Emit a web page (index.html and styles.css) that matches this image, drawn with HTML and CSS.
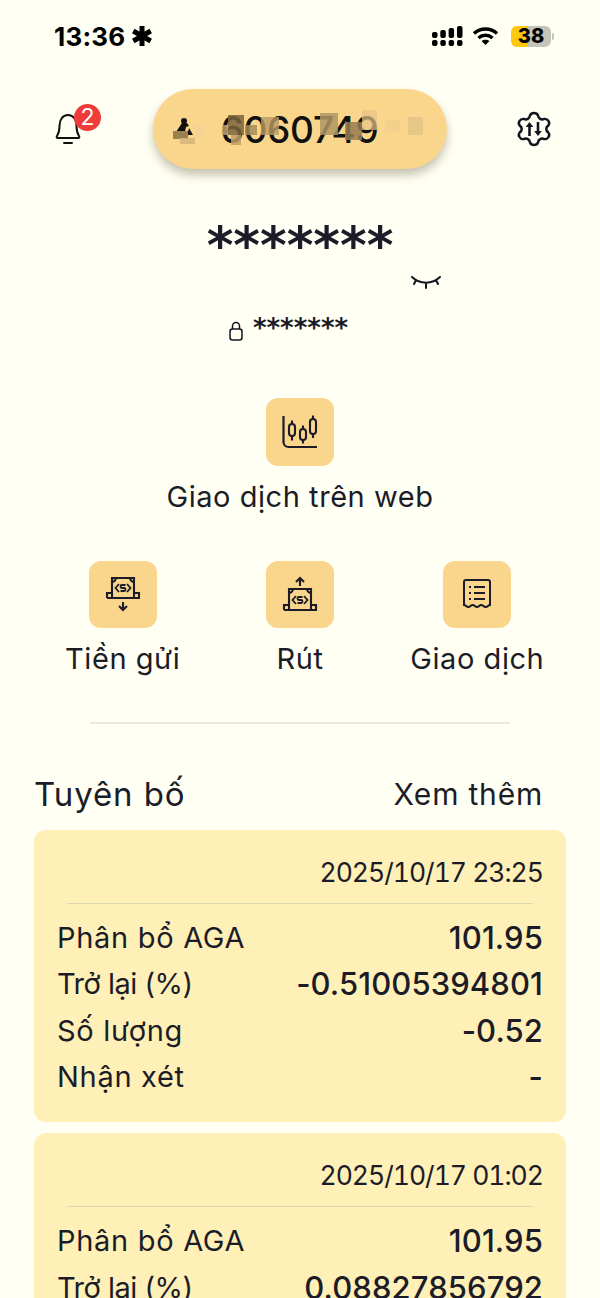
FILE: index.html
```html
<!DOCTYPE html>
<html lang="vi">
<head>
    <meta charset="UTF-8">
    <meta name="viewport" content="width=device-width, initial-scale=1.0">
    <title>Tài khoản</title>
    <link rel="stylesheet" href="styles.css">
</head>
<body>
    <div class="status-bar">
        <div class="status-left">
            <span class="clock">13:36</span>
            <svg class="focus-icon" width="22" height="22" viewBox="0 0 22 22"><path d="M11 1v20M2.300 6l17.400 10M2.300 16L19.700 6" stroke="#000" stroke-width="5"/></svg>
        </div>
        <div class="status-right">
            <svg class="signal" width="33" height="22" viewBox="0 0 33 22" fill="#000">
                <rect x="1" y="15" width="5.500" height="6" rx="2"/><rect x="9.300" y="15" width="5.500" height="6" rx="2"/><rect x="17.600" y="15" width="5.500" height="6" rx="2"/><rect x="26" y="15" width="5.500" height="6" rx="2"/>
                <rect x="1" y="7" width="5.500" height="6" rx="2"/><rect x="9.300" y="5" width="5.500" height="8" rx="2"/><rect x="17.600" y="3" width="5.500" height="10" rx="2"/><rect x="26" y="1" width="5.500" height="12" rx="2"/>
            </svg>
            <svg class="wifi" width="27" height="20" viewBox="0 0 27 20" fill="none" stroke="#000" stroke-width="3.400">
                <path d="M2 7.500c6.500-6 16.500-6 23 0"/><path d="M6.500 12c4-3.600 10-3.600 14 0"/><path d="M13.500 19l-4-4c2.300-1.800 5.700-1.800 8 0z" fill="#000" stroke="none"/>
            </svg>
            <div class="battery"><span class="battery-level">38</span></div>
            <span class="battery-tip"></span>
        </div>
    </div>

    <header class="top-bar">
        <div class="bell-wrap">
            <svg width="30" height="34" viewBox="0 0 30 34" fill="none" stroke="#111" stroke-width="2" stroke-linejoin="round">
                <path d="M4 24c2-3 2.500-5 2.500-10C6.500 8 9.500 3 15 3s8.500 5 8.500 11c0 5 .5 7 2.500 10 .7 1.200.2 2-1 2H5c-1.200 0-1.700-.8-1-2z"/>
                <path d="M11 31h8" stroke-linecap="round"/>
            </svg>
            <span class="badge">2</span>
        </div>

        <div class="account-pill">
            <svg class="pill-logo" width="20" height="20" viewBox="0 0 20 20" fill="#111">
                <circle cx="10" cy="4" r="3"/><path d="M2 15L8 6h5l2 3-3 1-1 5zM15 11l4 7h-6z"/>
            </svg>
            <span class="pill-number">6060749</span>
            <span class="mosaic m1"></span><span class="mosaic m2"></span><span class="mosaic m3"></span>
            <span class="mosaic m4"></span><span class="mosaic m5"></span><span class="mosaic m6"></span>
            <span class="mosaic m7"></span><span class="mosaic m8"></span><span class="mosaic m9"></span>
            <span class="mosaic m10"></span><span class="mosaic m11"></span><span class="mosaic m12"></span>
            <span class="mosaic m13"></span>
        </div>

        <svg class="gear" width="38" height="38" viewBox="-2 -2 38 38" fill="none" stroke="#14141f" stroke-width="2.400" stroke-linejoin="round">
            <path transform="translate(17 17) scale(1.050 1) translate(-17 -17)" d="M13.140 3.540A4.200 4.200 0 0 1 20.860 3.540A4 4 0 0 0 26.730 6.930A4.200 4.200 0 0 1 30.580 13.610A4 4 0 0 0 30.580 20.390A4.200 4.200 0 0 1 26.730 27.070A4 4 0 0 0 20.860 30.460A4.200 4.200 0 0 1 13.140 30.460A4 4 0 0 0 7.270 27.070A4.200 4.200 0 0 1 3.420 20.390A4 4 0 0 0 3.420 13.610A4.200 4.200 0 0 1 7.270 6.930A4 4 0 0 0 13.140 3.540Z"/>
            <path d="M12.500 24V13M21 10v11" stroke-width="2.600"/>
            <path d="M12.500 10l3.800 5h-7.600zM21 24l3.800-5h-7.600z" fill="#14141f" stroke="none"/>
        </svg>
    </header>

    <section class="balance">
        <div class="balance-main">*******</div>
        <div class="eye-row">
            <svg width="32" height="18" viewBox="0 0 32 18" fill="none" stroke="#14141f" stroke-width="2" stroke-linecap="round">
                <path d="M2 3c8 7.500 20 7.500 28 0M6 6L4 10M16 9v5M26 6l2 4"/>
            </svg>
        </div>
        <div class="balance-locked">
            <svg width="16" height="20" viewBox="0 0 16 20" fill="none" stroke="#14141f" stroke-width="1.500">
                <rect x="2" y="8" width="12" height="11" rx="2.500"/><path d="M4.500 8V5a3.500 3.500 0 0 1 7 0v3"/>
            </svg>
            <span class="locked-stars">*******</span>
        </div>
    </section>

    <section class="web-trade">
        <div class="action">
            <div class="action-icon">
                <svg width="38" height="38" viewBox="0 0 38 38" fill="none" stroke="#1c1c28" stroke-width="2.100">
                    <path d="M2.500 3v26a5 5 0 0 0 5 5H36" stroke-width="2.200"/>
                    <rect x="8" y="11" width="6" height="12" rx="3"/><path d="M11 7.500V11M11 23v4.500"/>
                    <rect x="19" y="16" width="6" height="11" rx="3"/><path d="M22 12.500V16M22 27v3.500"/>
                    <rect x="29" y="6" width="6" height="15" rx="3"/><path d="M32 2.500V6M32 21v4"/>
                </svg>
            </div>
            <span class="action-label">Giao dịch trên web</span>
        </div>
    </section>

    <section class="actions">
        <div class="action">
            <div class="action-icon">
                <svg width="36" height="36" viewBox="0 0 36 36" fill="none" stroke="#1c1c28" stroke-width="2.100">
                    <path d="M7 22V2h22v20M2 22h32v-5h-5M2 22v-5h5M7 6c2 0 4-2 4-4M29 6c-2 0-4-2-4-4"/>
                    <path d="M14 8l-3.500 4 3.500 4M22 8l3.500 4-3.500 4M20.500 9h-3.500a1.500 1.500 0 0 0 0 3h2a1.500 1.500 0 0 1 0 3h-3.500" stroke-width="1.800"/>
                    <path d="M18 26v8M14 30l4 4 4-4"/>
                </svg>
            </div>
            <span class="action-label">Tiền gửi</span>
        </div>
        <div class="action">
            <div class="action-icon">
                <svg width="36" height="36" viewBox="0 0 36 36" fill="none" stroke="#1c1c28" stroke-width="2.100">
                    <path d="M18 10V2M14 6l4-4 4 4"/>
                    <path d="M7 34V13h22v21M2 34h32v-5h-5M2 34v-5h5M7 17c2 0 4-2 4-4M29 17c-2 0-4-2-4-4"/>
                    <path d="M14 20l-3.500 4 3.500 4M22 20l3.500 4-3.500 4M20.500 21h-3.500a1.500 1.500 0 0 0 0 3h2a1.500 1.500 0 0 1 0 3h-3.500" stroke-width="1.800"/>
                </svg>
            </div>
            <span class="action-label">Rút</span>
        </div>
        <div class="action">
            <div class="action-icon">
                <svg width="28" height="30" viewBox="0 0 28 30" fill="none" stroke="#1c1c28" stroke-width="2">
                    <path d="M1 26V3a2 2 0 0 1 2-2h22a2 2 0 0 1 2 2v23c-2 0-2 2-4.300 2s-2.300-2-4.400-2-2.200 2-4.300 2-2.200-2-4.300-2-2.300 2-4.400 2S3 26 1 26z"/>
                    <path d="M6 8h2M6 14h2M6 20h2M11 8h11M11 14h11M11 20h11" stroke-width="2"/>
                </svg>
            </div>
            <span class="action-label">Giao dịch</span>
        </div>
    </section>

    <hr class="divider">

    <div class="statement-head">
        <h2>Tuyên bố</h2>
        <span class="more">Xem thêm</span>
    </div>

    <div class="card">
        <div class="card-date">2025/10/17 23:25</div>
        <div class="card-line"></div>
        <div class="row"><span>Phân bổ AGA</span><span class="value">101.95</span></div>
        <div class="row"><span class="tight">Trở lại (%)</span><span class="value">-0.51005394801</span></div>
        <div class="row"><span>Số lượng</span><span class="value">-0.52</span></div>
        <div class="row"><span>Nhận xét</span><span class="value">-</span></div>
    </div>

    <div class="card">
        <div class="card-date">2025/10/17 01:02</div>
        <div class="card-line"></div>
        <div class="row"><span>Phân bổ AGA</span><span class="value">101.95</span></div>
        <div class="row"><span class="tight">Trở lại (%)</span><span class="value">0.08827856792</span></div>
    </div>
</body>
</html>
```

FILE: styles.css
```css
html, body {
    height: 1298px;
    overflow: hidden;
}

body {
    margin: 0;
    background-color: #fffff3;
    color: #1c1c28;
    font-family: Inter, "Noto Sans", sans-serif;
}

/* status bar */
.status-bar {
    display: flex;
    justify-content: space-between;
    align-items: center;
    height: 24px;
    padding: 24px 46px 0 54px;
}

.status-left, .status-right {
    display: flex;
    align-items: center;
}

.clock {
    font-size: 26px;
    font-weight: 700;
    color: #000;
    letter-spacing: 0.2px;
}

.focus-icon {
    margin-left: 6px;
}

.signal {
    margin-right: 8px;
}

.wifi {
    margin-right: 12px;
}

.battery {
    width: 40px;
    height: 21px;
    border-radius: 6px;
    background: linear-gradient(to right, #fdc90f 42%, #c4c4ba 42%);
    text-align: center;
    font-size: 20px;
    font-weight: 800;
    line-height: 21px;
    color: #000;
}

.battery-tip {
    width: 2px;
    height: 7px;
    margin-left: 1px;
    background-color: #c4c4ba;
    border-radius: 0 2px 2px 0;
}

/* header */
.top-bar {
    display: flex;
    justify-content: space-between;
    align-items: center;
    height: 80px;
    margin-top: 41px;
    padding: 0 47px 0 53px;
}

.bell-wrap {
    position: relative;
    width: 30px;
    height: 34px;
}

.badge {
    position: absolute;
    top: -8px;
    left: 21px;
    width: 27px;
    height: 27px;
    border-radius: 50%;
    background-color: #ef3b39;
    color: #fff;
    font-size: 23px;
    line-height: 27px;
    text-align: center;
}

.account-pill {
    position: relative;
    display: flex;
    align-items: center;
    justify-content: center;
    width: 294px;
    height: 80px;
    margin-left: 1px;
    border-radius: 40px;
    background-color: #fad68d;
    box-shadow: 0 6px 10px rgba(90, 80, 50, 0.35);
}

.pill-number {
    font-size: 37px;
    font-weight: 500;
    letter-spacing: -0.3px;
    color: #111;
}

.pill-logo {
    position: absolute;
    left: 21px;
    top: 28px;
}

/* pixelated cover over the account number */
.mosaic {
    position: absolute;
    background-color: rgba(150, 125, 80, 0.85);
}

.m1 { left: 20px; top: 42px; width: 15px; height: 8px; background-color: #9a8250; }
.m2 { left: 27px; top: 49px; width: 15px; height: 6px; background-color: rgba(210, 180, 120, 0.8); }
.m3 { left: 42px; top: 36px; width: 8px; height: 12px; background-color: rgba(240, 210, 150, 0.8); }
.m4 { left: 69px; top: 36px; width: 7px; height: 10px; background-color: rgba(200, 170, 115, 0.8); }
.m5 { left: 75px; top: 26px; width: 16px; height: 20px; background-color: rgba(125, 100, 60, 0.85); }
.m6 { left: 78px; top: 46px; width: 10px; height: 10px; background-color: rgba(190, 160, 105, 0.85); }
.m7 { left: 92px; top: 36px; width: 12px; height: 10px; background-color: rgba(165, 140, 90, 0.85); }
.m8 { left: 108px; top: 28px; width: 18px; height: 18px; background-color: rgba(185, 155, 100, 0.8); }
.m9 { left: 167px; top: 24px; width: 18px; height: 22px; background-color: rgba(175, 150, 100, 0.85); }
.m10 { left: 192px; top: 33px; width: 17px; height: 18px; }
.m11 { left: 209px; top: 21px; width: 15px; height: 20px; background-color: rgba(230, 195, 135, 0.7); }
.m12 { left: 232px; top: 31px; width: 15px; height: 12px; background-color: rgba(240, 205, 140, 0.7); }
.m13 { left: 255px; top: 28px; width: 15px; height: 18px; background-color: rgba(225, 195, 135, 0.8); }

/* balance */
.balance {
    position: relative;
    text-align: center;
}

.balance-main {
    height: 56px;
    margin-top: 49px;
    font-family: "DejaVu Sans", sans-serif;
    font-size: 51px;
    font-weight: 700;
    line-height: 56px;
}

.eye-row {
    display: flex;
    justify-content: flex-end;
    height: 18px;
    padding: 0 158px 0 0;
}

.balance-locked {
    display: flex;
    justify-content: center;
    align-items: center;
    gap: 9px;
    height: 30px;
    margin-top: 24px;
    padding-right: 24px;
}

.locked-stars {
    font-family: "DejaVu Sans", sans-serif;
    font-size: 26px;
    font-weight: 700;
    line-height: 30px;
    margin-top: -6px;
}

/* action buttons */
.action {
    display: flex;
    flex-direction: column;
    align-items: center;
}

.action-icon {
    display: flex;
    align-items: center;
    justify-content: center;
    width: 68px;
    height: 67.500px;
    border-radius: 12px;
    background-color: #fad68d;
}

.action-label {
    margin-top: 13px;
    font-size: 29px;
    letter-spacing: 0.55px;
    line-height: 36px;
    white-space: nowrap;
}

.web-trade {
    margin-top: 52px;
}

.actions {
    display: grid;
    grid-template-columns: repeat(3, 1fr);
    padding: 0 34px;
    margin-top: 46px;
}

.divider {
    height: 2px;
    margin: 44.500px 90px 0;
    border: none;
    background-color: #e8e8dc;
}

/* statement list */
.statement-head {
    display: flex;
    justify-content: space-between;
    align-items: center;
    height: 44px;
    margin-top: 48px;
    padding: 0 57px 0 34px;
}

.statement-head h2 {
    margin: 0;
    font-size: 33px;
    font-weight: 400;
    letter-spacing: 0.9px;
}

.more {
    font-size: 30px;
    letter-spacing: 0.8px;
}

.card {
    margin: 14px 34px 11px;
    padding: 20px 23px 22px;
    border-radius: 12px;
    background-color: #fef0b7;
}

.card + .card {
    margin-top: 0;
}

.card-date {
    height: 45px;
    text-align: right;
    font-size: 26.500px;
    font-variant-numeric: tabular-nums;
    letter-spacing: -1px;
    line-height: 44px;
}

.card-line {
    height: 1px;
    margin: 8px 10px 11px;
    background-color: #ded7b4;
}

.row {
    display: flex;
    justify-content: space-between;
    align-items: center;
    height: 46.300px;
    font-size: 29px;
    letter-spacing: 0.7px;
}

.tight {
    letter-spacing: -0.5px;
}

.value {
    font-size: 31px;
    font-weight: 500;
    letter-spacing: 0.1px;
}
```
